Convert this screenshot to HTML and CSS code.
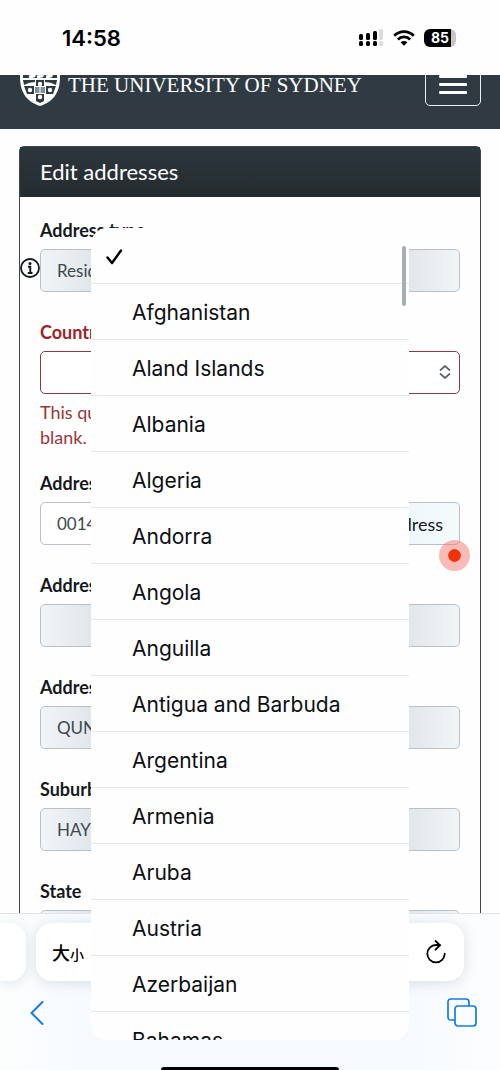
FILE: index.html
```html
<!DOCTYPE html>
<html lang="en">
<head>
  <meta charset="UTF-8" />
  <meta name="viewport" content="width=device-width, initial-scale=1.0"/>
  <title>Edit addresses</title>
  <link rel="stylesheet" href="styles.css">
</head>
<body>

  <div class="status-bar">
    <span class="time">14:58</span>
    <div class="status-icons">
      <svg width="25" height="18" viewBox="0 0 25 18">
        <g fill="#000">
          <rect x="0" y="5" width="4" height="6" rx="1.5"/>
          <rect x="7" y="4" width="4" height="7" rx="1.5"/>
          <rect x="14" y="2" width="4" height="9" rx="1.5"/>
          <rect x="0" y="12" width="4" height="5" rx="1.5"/>
          <rect x="7" y="12" width="4" height="5" rx="1.5"/>
          <rect x="14" y="12" width="4" height="5" rx="1.5"/>
        </g>
        <g fill="#dcdce0">
          <rect x="20" y="0" width="4" height="11" rx="1.5"/>
          <rect x="20" y="12" width="4" height="5" rx="1.5"/>
        </g>
      </svg>
      <svg width="22" height="16" viewBox="0 0 22 16">
        <g fill="none" stroke="#000" stroke-width="2.8">
          <path d="M1.2 5.7C6.8 0.2 15.2 0.2 20.8 5.7"/>
          <path d="M4.8 9.4C8.4 6 13.6 6 17.2 9.4"/>
        </g>
        <path d="M7.6 12.2C9.5 10.5 12.5 10.5 14.4 12.2L11 15.8Z" fill="#000"/>
      </svg>
      <div class="battery"><span class="battery-level">85</span></div>
    </div>
  </div>

  <main class="page">
    <header class="navbar">
      <a class="brand" href="#">
        <svg class="crest" width="42" height="50" viewBox="0 0 42 50">
          <path d="M1 1H41V20C41 37 33 45 21 49C9 45 1 37 1 20Z" fill="#fff"/>
          <path d="M4 4H38V21H4Z" fill="#2e3940"/>
          <path d="M10 20L15 19L17 13M18 20L23 19L26 13M27 20L32 19L34 13M9 15L13 13M19 15L22 12" stroke="#fff" stroke-width="3" fill="none"/>
          <path d="M4 23H16V25Q10 25 5 28ZM26 23H38L37 28Q32 25 26 25Z" fill="#2e3940"/>
          <path d="M17 23H25V29H17ZM17 37H25V44L21 46L17 44Z" fill="#2e3940"/>
          <path d="M5 29H15V37H8ZM27 29H37L34 37H27Z" fill="#2e3940"/>
          <path d="M16 30H26V36H16Z" fill="#84919a"/>
          <path d="M21 30V36" stroke="#fff" stroke-width="1"/>
          <g fill="#fff">
            <circle cx="21" cy="27" r="2.2"/>
            <circle cx="11" cy="33" r="2.2"/>
            <circle cx="31" cy="33" r="2.2"/>
            <circle cx="21" cy="40" r="2.2"/>
          </g>
        </svg>
        <span class="brand-name">THE UNIVERSITY OF SYDNEY</span>
      </a>
      <button class="nav-toggle" type="button" aria-label="Menu">
        <span></span>
        <span></span>
        <span></span>
      </button>
    </header>

    <section class="panel">
      <h1 class="panel-title">Edit addresses</h1>

      <form class="panel-body">
        <div class="form-group">
          <label for="addressType">Address type</label>
          <input class="field" id="addressType" type="text" value="Residential" readonly>
          <button class="info" type="button" aria-label="Help">
            <svg width="20" height="20" viewBox="0 0 20 20">
              <circle cx="10" cy="10" r="9" fill="#fff" stroke="#15191c" stroke-width="1.8"/>
              <circle cx="10" cy="5.5" r="1.5" fill="#15191c"/>
              <path d="M8 8.7H10.3V15M7.8 15H12.5" fill="none" stroke="#15191c" stroke-width="1.9"/>
            </svg>
          </button>
        </div>

        <div class="form-group has-error">
          <label for="country">Country</label>
          <div class="select-wrap">
            <select class="field" id="country">
              <option value=""></option>
              <option>Afghanistan</option>
              <option>Aland Islands</option>
              <option>Albania</option>
            </select>
            <svg class="select-arrows" width="12" height="14" viewBox="0 0 12 14">
              <path d="M1 5.5L6 1L11 5.5M1 8.500L6 13L11 8.5" fill="none" stroke="#5a666e" stroke-width="1.7"/>
            </svg>
          </div>
          <p class="error">This question is mandatory and cannot be left blank.</p>
        </div>

        <div class="form-group">
          <label for="address1">Address 1</label>
          <div class="input-row">
            <input class="field editable" id="address1" type="text" value="0014">
            <button class="find-btn" type="button">Find address</button>
          </div>
          <span class="marker"></span>
        </div>

        <div class="form-group">
          <label for="address2">Address 2</label>
          <input class="field" id="address2" type="text" readonly>
        </div>

        <div class="form-group">
          <label for="address3">Address 3</label>
          <input class="field" id="address3" type="text" value="QUN" readonly>
        </div>

        <div class="form-group">
          <label for="suburb">Suburb</label>
          <input class="field" id="suburb" type="text" value="HAYMARKET" readonly>
        </div>

        <div class="form-group">
          <label for="state">State</label>
          <input class="field" id="state" type="text" readonly>
        </div>
      </form>
    </section>
  </main>

  <footer class="browser-bar">
    <div class="tabs-row">
      <div class="tab-previous"></div>
      <div class="address-bar">
        <button class="text-size" type="button" lang="zh">大<small>小</small></button>
        <button class="icon-btn" type="button" aria-label="Reload">
          <svg width="20" height="24" viewBox="0 0 20 24">
            <path d="M18.7 13.7A8.700 8.700 0 1 1 10 5H14M9.5 1L14 5.2L9.5 9.7" fill="none" stroke="#000" stroke-width="1.8" stroke-linecap="round"/>
          </svg>
        </button>
      </div>
    </div>
    <div class="tools-row">
      <button class="icon-btn" type="button" aria-label="Back">
        <svg width="14" height="24" viewBox="0 0 14 24">
          <path d="M12.5 1L1.5 12L12.5 23" fill="none" stroke="#1579ea" stroke-width="2" stroke-linecap="round"/>
        </svg>
      </button>
      <button class="icon-btn" type="button" aria-label="Tabs">
        <svg width="30" height="30" viewBox="0 0 30 30">
          <path d="M8 22H4Q1 22 1 19V4Q1 1 4 1H19Q22 1 22 4V8" fill="none" stroke="#1579ea" stroke-width="1.7"/>
          <rect x="8" y="8" width="21" height="20" rx="3" fill="none" stroke="#1579ea" stroke-width="1.7"/>
        </svg>
      </button>
    </div>
    <div class="home-indicator"></div>
  </footer>

  <div class="dropdown">
    <ul>
      <li><button type="button" aria-label="No country selected">
        <svg class="check" width="17" height="16" viewBox="0 0 17 16">
          <path d="M1.5 8.5L6 14L15 1.5" fill="none" stroke="#000" stroke-width="2.4" stroke-linecap="round" stroke-linejoin="round"/>
        </svg>
      </button></li>
      <li><button type="button">Afghanistan</button></li>
      <li><button type="button">Aland Islands</button></li>
      <li><button type="button">Albania</button></li>
      <li><button type="button">Algeria</button></li>
      <li><button type="button">Andorra</button></li>
      <li><button type="button">Angola</button></li>
      <li><button type="button">Anguilla</button></li>
      <li><button type="button">Antigua and Barbuda</button></li>
      <li><button type="button">Argentina</button></li>
      <li><button type="button">Armenia</button></li>
      <li><button type="button">Aruba</button></li>
      <li><button type="button">Austria</button></li>
      <li><button type="button">Azerbaijan</button></li>
      <li><button type="button">Bahamas</button></li>
    </ul>
    <span class="scroll-thumb"></span>
  </div>

</body>
</html>
```
FILE: styles.css
```css
* {
  box-sizing: border-box;
}

body {
  margin: 0;
  height: 100vh;
  display: flex;
  flex-direction: column;
  position: relative;
  overflow: hidden;
  background: #fefefe;
  font-family: Lato, "Open Sans", sans-serif;
  color: #15191c;
}

button {
  font: inherit;
  color: inherit;
  background: none;
  border: none;
  padding: 0;
  cursor: pointer;
}

svg {
  display: block;
}

/* status bar */
.status-bar {
  flex: none;
  height: 75px;
  padding: 0 44px 0 62px;
  display: flex;
  align-items: center;
  justify-content: space-between;
  font-family: Inter, sans-serif;
}

.time {
  font-size: 22px;
  font-weight: 600;
  color: #000;
}

.status-icons {
  display: flex;
  align-items: center;
  gap: 9px;
}

.battery {
  width: 32px;
  height: 18px;
  border-radius: 6px;
  background: linear-gradient(to right, #000 85%, #c4c7c8 85%);
  text-align: center;
}

.battery-level {
  display: block;
  font-size: 14px;
  line-height: 18px;
  font-weight: 700;
  color: #fff;
}

/* page */
.page {
  flex: 1;
  min-height: 0;
  overflow: hidden;
}

/* scrolled partly out of view */
.navbar {
  height: 94px;
  margin-top: -40px;
  padding: 0 19px;
  display: flex;
  align-items: center;
  justify-content: space-between;
  background: linear-gradient(#2c3a42, #323a43);
}

.brand {
  display: flex;
  align-items: center;
  gap: 7px;
  color: #fff;
  text-decoration: none;
}

.brand-name {
  padding-top: 6px;
  font-family: "Liberation Serif", serif;
  font-size: 21px;
  white-space: nowrap;
}

.nav-toggle {
  width: 56px;
  height: 48px;
  display: flex;
  flex-direction: column;
  align-items: center;
  justify-content: center;
  gap: 5px;
  padding-top: 4px;
  border: 1px solid #e9f1f5;
  border-radius: 5px;
}

.nav-toggle span {
  width: 28px;
  height: 3px;
  border-radius: 1px;
  background: #fff;
}

.panel {
  margin: 17px 19px 0;
  border: 1px solid #3c464c;
  border-radius: 5px;
}

.panel-title {
  margin: 0;
  padding: 0 20px;
  font-size: 22px;
  line-height: 50px;
  font-weight: 400;
  color: #fff;
  background: linear-gradient(#2b363d, #252c2f);
}

.panel-body {
  padding: 20px;
}

.form-group {
  position: relative;
  margin-bottom: 27px;
}

.form-group label {
  display: block;
  margin-bottom: 6px;
  font-size: 18px;
  line-height: 26px;
  font-weight: 700;
}

.field {
  display: block;
  width: 100%;
  height: 43px;
  padding: 0 16px;
  border: 1px solid #b9c0c7;
  border-radius: 5px;
  background: linear-gradient(to right, #f1f5f7, #dfe5e9 13%, #dfe5e9 87%, #f1f5f7);
  font-family: inherit;
  font-size: 17px;
  color: #3e484f;
}

.editable {
  flex: 1;
  min-width: 0;
  background: #fff;
  border-radius: 5px 0 0 5px;
}

.input-row {
  display: flex;
}

.find-btn {
  height: 43px;
  padding: 0 16px;
  border: 1px solid #b9c0c7;
  border-left: none;
  border-radius: 0 5px 5px 0;
  background: linear-gradient(to right, #e9f2f5, #f4fbfd);
  font-size: 18px;
}

.info {
  position: absolute;
  left: -20px;
  top: 41px;
}

.marker {
  position: absolute;
  right: -10px;
  top: 70px;
  width: 31px;
  height: 31px;
  border: 9px solid rgba(246, 120, 110, 0.5);
  border-radius: 50%;
  background: #f03208;
  background-clip: padding-box;
}

.has-error {
  margin-bottom: 20px;
}

.has-error label {
  color: #a02328;
}

.has-error .field {
  appearance: none;
  border-color: #843c42;
  background: #fff;
}

.select-wrap {
  position: relative;
}

.select-arrows {
  position: absolute;
  right: 9px;
  top: 14px;
}

.error {
  margin: 6px 0 0;
  padding-right: 56px;
  font-size: 18px;
  line-height: 25px;
  color: #98383b;
}

/* browser bar */
.browser-bar {
  flex: none;
  height: 157px;
  padding-top: 9px;
  display: flex;
  flex-direction: column;
  overflow: hidden;
  position: relative;
  background: linear-gradient(to right, #fcfefe, #f6fafe 20%, #f6fafe 80%, #fcfefe);
  border-top: 1px solid #dfe6ea;
}

.tabs-row {
  display: flex;
  gap: 10px;
  padding-right: 36px;
}

.tab-previous {
  width: 26px;
  border-radius: 0 16px 16px 0;
  background: #fff;
  box-shadow: 0 2px 12px rgba(30, 50, 80, 0.12);
}

.address-bar {
  flex: 1;
  height: 58px;
  padding: 0 18px 0 16px;
  display: flex;
  align-items: center;
  justify-content: space-between;
  border-radius: 16px;
  background: #fff;
  box-shadow: 0 2px 14px rgba(30, 50, 80, 0.14);
}

.text-size {
  font-family: "Noto Sans CJK SC", sans-serif;
  font-size: 18px;
  font-weight: 500;
  color: #000;
}

.text-size small {
  font-size: 14px;
}

.tools-row {
  display: flex;
  align-items: center;
  justify-content: space-between;
  padding: 17px 23px 0 30px;
}

.home-indicator {
  width: 178px;
  height: 6px;
  flex: none;
  margin: 39px auto 0;
  border-radius: 3px;
  background: #000;
}

/* country list */
.dropdown {
  position: absolute;
  top: 228px;
  right: 91px;
  bottom: 30px;
  left: 91px;
  overflow: hidden;
  border-radius: 16px;
  background: #fefefe;
}

.dropdown ul {
  margin: 0;
  padding: 0;
  list-style: none;
}

.dropdown li {
  border-bottom: 1px solid #e4e9ee;
}

.dropdown li button {
  width: 100%;
  height: 55px;
  padding: 2px 16px 0 41px;
  display: flex;
  align-items: center;
  font-family: Inter, sans-serif;
  font-size: 21px;
  color: #0c0f11;
}

.dropdown .check {
  margin-left: -26px;
}

.scroll-thumb {
  position: absolute;
  top: 18px;
  right: 3px;
  width: 4px;
  height: 60px;
  border-radius: 2px;
  background: #a5b0b6;
}
```
